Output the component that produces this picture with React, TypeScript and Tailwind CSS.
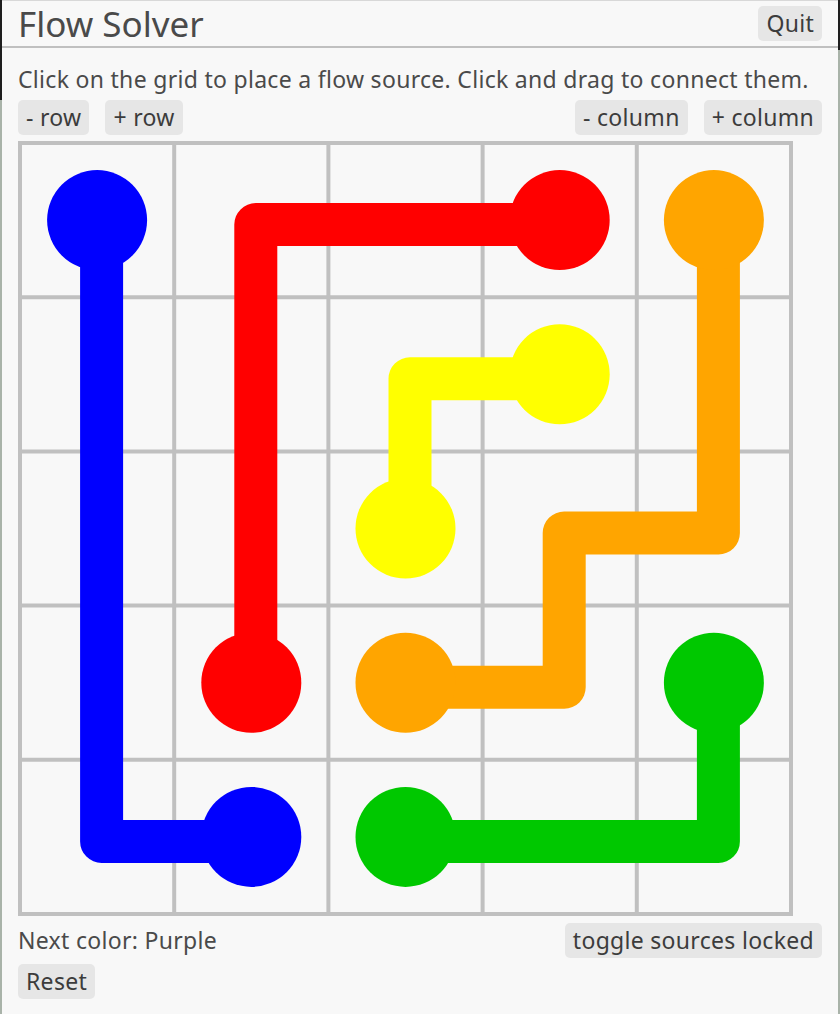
import React from 'react'

const P = (775 - 4) / 5
const c = (i: number) => 2 + (i + 0.5) * P
const OFF = 4.5

const flows = [
  { color: '#0000ff', path: [[0, 0], [0, 4], [1, 4]] },
  { color: '#ff0000', path: [[3, 0], [1, 0], [1, 3]] },
  { color: '#ffa500', path: [[4, 0], [4, 2], [3, 2], [3, 3], [2, 3]] },
  { color: '#ffff00', path: [[3, 1], [2, 1], [2, 2]] },
  { color: '#00c800', path: [[4, 3], [4, 4], [2, 4]] },
]

function Btn({ children }: { children: React.ReactNode }) {
  return (
    <button className="h-[35px] rounded-[5px] bg-[#e6e6e6] px-[8px] text-[23px] leading-none tracking-[0.3px] text-[#3c3c3c]">
      {children}
    </button>
  )
}

function Grid() {
  return (
    <svg width={775} height={775} className="block">
      {[0, 1, 2, 3, 4, 5].map((i) => (
        <g key={i}>
          <line x1={2 + i * P} y1={0} x2={2 + i * P} y2={775} stroke="#c0c0c0" strokeWidth={4} />
          <line x1={0} y1={2 + i * P} x2={775} y2={2 + i * P} stroke="#c0c0c0" strokeWidth={4} />
        </g>
      ))}
      {flows.map((f, k) => (
        <polyline
          key={k}
          points={f.path.map(([x, y]) => `${c(x) + OFF},${c(y) + OFF}`).join(' ')}
          fill="none"
          stroke={f.color}
          strokeWidth={43}
          strokeLinejoin="round"
          strokeLinecap="round"
        />
      ))}
      {flows.map((f, k) => {
        const a = f.path[0]
        const b = f.path[f.path.length - 1]
        return (
          <g key={k}>
            <circle cx={c(a[0])} cy={c(a[1])} r={50} fill={f.color} />
            <circle cx={c(b[0])} cy={c(b[1])} r={50} fill={f.color} />
          </g>
        )
      })}
    </svg>
  )
}

export default function App() {
  return (
    <div
      className="flex h-[1014px] w-[840px] bg-[#f8f8f8] text-[#3c3c3c]"
      style={{ fontFamily: '"Noto Sans", "Open Sans", sans-serif' }}
    >
      {/* window edge bleed */}
      <div className="flex w-[2px] flex-col">
        <div className="h-[100px] bg-[#1e1e1e]" />
        <div className="flex-1 bg-[#a9b3a9]" />
      </div>

      <div className="flex flex-1 flex-col border-t border-[#d8d8d8]">
        {/* Header */}
        <div className="flex h-[47px] items-center justify-between border-b-2 border-[#c0c0c0] pl-[16px] pr-[16px]">
          <h1 className="text-[35px] leading-none font-normal text-[#4a4a4a]">Flow Solver</h1>
          <Btn>Quit</Btn>
        </div>

        <div className="flex flex-col px-[16px]">
          <p className="mt-[16px] text-[23px] leading-[30px] tracking-[0.3px] text-[#4a4a4a]">
            Click on the grid to place a flow source. Click and drag to connect them.
          </p>

          <div className="mt-[6px] flex items-center justify-between">
            <div className="flex gap-[16px]">
              <Btn>- row</Btn>
              <Btn>+ row</Btn>
            </div>
            <div className="flex gap-[16px]">
              <Btn>- column</Btn>
              <Btn>+ column</Btn>
            </div>
          </div>

          <div className="mt-[6px]">
            <Grid />
          </div>

          <div className="mt-[7px] flex items-center justify-between">
            <span className="text-[23px] tracking-[0.3px] text-[#4a4a4a]">Next color: Purple</span>
            <Btn>toggle sources locked</Btn>
          </div>

          <div className="mt-[6px]">
            <Btn>Reset</Btn>
          </div>
        </div>
      </div>

      <div className="flex w-[2px] flex-col">
        <div className="h-[50px] bg-[#1e1e1e]" />
        <div className="flex-1 bg-[#a9b3a9]" />
      </div>
    </div>
  )
}
